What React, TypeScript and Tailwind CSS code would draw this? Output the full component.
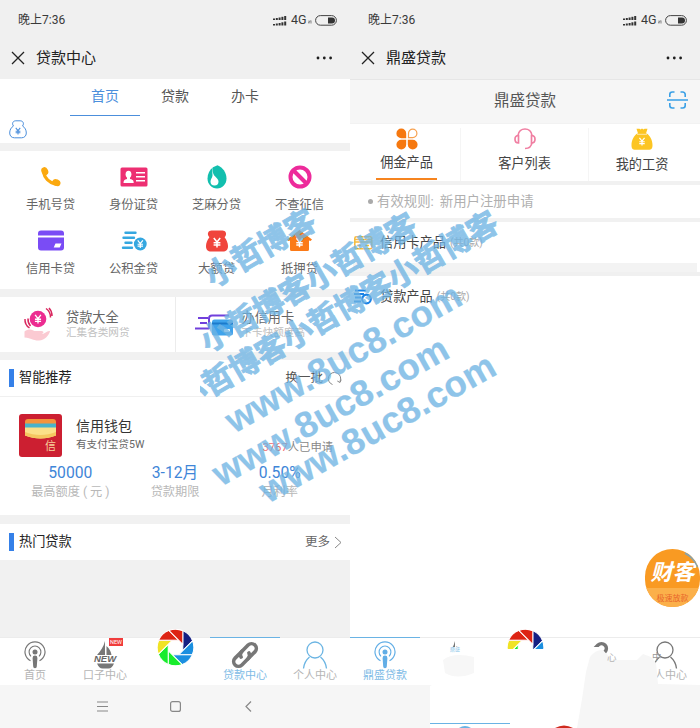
import React from "react";

const FONT = "font-['Roboto','Noto_Sans_CJK_SC',sans-serif]";

function Signal() {
  const hs = [1.5, 2, 2.5, 3.2, 4];
  return (
    <svg width="14" height="11" viewBox="0 0 14 11" fill="#333">
      {hs.map((h, i) => (
        <g key={i}>
          <rect x={i * 2.8} y={5 - h} width="2" height={h} />
          <rect x={i * 2.8} y={10.5 - h} width="2" height={h} />
        </g>
      ))}
    </svg>
  );
}

function StatusHeader({ title }: { title: string }) {
  return (
    <header className="h-[79px] shrink-0 bg-[#f0f0f0] text-[#222]">
      <div className="flex h-[40px] items-center pl-[18px] pr-[13px] text-[12px] leading-none text-[#3a3a3a]">
        <span className="flex-1">晚上7:36</span>
        <Signal />
        <span className="ml-[4px] w-[16px] text-[12.500px]">4G</span>
        <svg className="mt-[4px] ml-[1px]" width="4" height="4" viewBox="0 0 4 4" stroke="#777" strokeWidth="0.900">
          <path d="M1 .5v3M3 .5v3M.3 2.800l2.400-2" />
        </svg>
        <svg className="ml-[3px]" width="22" height="11" viewBox="0 0 22 11">
          <rect x="0.600" y="0.600" width="20.800" height="9.600" rx="4.800" fill="none" stroke="#444" strokeWidth="1" />
          <path d="M13 2.400h4a2.800 2.800 0 0 1 0 6h-4z" fill="#333" />
        </svg>
      </div>
      <div className="flex h-[35px] items-center pl-[11px] pr-[17px] leading-none">
        <svg width="14" height="14" viewBox="0 0 14 14" stroke="#222" strokeWidth="1.300">
          <path d="M1 1l12 12M13 1L1 13" />
        </svg>
        <span className="mt-[1px] ml-[11px] flex-1 text-[15px]">{title}</span>
        <svg width="17" height="4" viewBox="0 0 17 4" fill="#1d1d1d">
          <circle cx="2" cy="2" r="1.400" />
          <circle cx="8.300" cy="2" r="1.400" />
          <circle cx="14.600" cy="2" r="1.400" />
        </svg>
      </div>
    </header>
  );
}

const Yen = ({ x, y, s, c }: { x: number; y: number; s: number; c: string }) => (
  <g transform={`translate(${x} ${y}) scale(${s})`} stroke={c} strokeWidth="1.500" fill="none">
    <path d="M-3.200-4.500L0 -.5L3.200-4.500M0-.8V5M-3.400.3H3.400M-3.400 2.600H3.400" />
  </g>
);

const icons: Record<string, React.ReactNode> = {
  phone: (
    <svg width="21" height="20" viewBox="0 0 21 20" fill="#fba90f">
      <path d="M3.500 5C4.500 10.500 9 15.500 15.500 17" fill="none" stroke="#fba90f" strokeWidth="3.400" strokeLinecap="round" />
      <ellipse cx="4.800" cy="4.200" rx="3.300" ry="4.200" transform="rotate(-25 4.800 4.200)" />
      <ellipse cx="16.400" cy="15.600" rx="4.200" ry="3.300" transform="rotate(25 16.400 15.600)" />
    </svg>
  ),
  id: (
    <svg width="28" height="20" viewBox="0 0 28 20">
      <rect x="0.500" y="0.500" width="27" height="19" rx="1.500" fill="#ed2f72" />
      <g fill="#fff">
        <ellipse cx="8.500" cy="7.300" rx="2.900" ry="3.600" />
        <path d="M7 9h3v3c3 .8 3.700 1.500 3.700 4H3.500c0-2.500.8-3.200 3.500-4z" />
        <path d="M16 5h9v1.500h-9zM16 9h9v1.500h-9zM16 13h9v1.500h-9z" />
      </g>
    </svg>
  ),
  drop: (
    <svg width="20" height="24" viewBox="0 0 20 24">
      <path d="M10.500.3C16 2.500 19.500 8 19.500 13.500c0 5.500-4 10-9.500 10S.5 19 .5 13.500C.5 9 2.500 5 6 2.200z" fill="#12bfae" />
      <path d="M5.500 1.500c-.2 5.500.5 7.500 2.500 9.700 1.500 1.600 3.500 3 3.500 5.300a4 4 0 0 1-8 0c0-2.200 1.800-3.500 2-6C5.700 8 4.500 5 5.500 1.500z" fill="#fff" />
    </svg>
  ),
  ban: (
    <svg width="24" height="24" viewBox="0 0 24 24" fill="none" stroke="#ed2b9b" strokeWidth="4">
      <circle cx="12" cy="12" r="9.500" />
      <path d="M5 5l14 14" />
    </svg>
  ),
  card: (
    <svg width="26" height="21" viewBox="0 0 26 21">
      <path d="M3 .5h20a3 3 0 0 1 3 3V5.500H0V3.500a3 3 0 0 1 3-3zM0 7.500h26v10a3 3 0 0 1-3 3H3a3 3 0 0 1-3-3z" fill="#7a4cf5" />
      <path d="M17.500 13.500h6l-1.800 4h-6z" fill="#fff" />
    </svg>
  ),
  fund: (
    <svg width="26" height="20" viewBox="0 0 26 20">
      <g stroke="#35a7e0" strokeWidth="2.400" strokeLinecap="round">
        <path d="M4.500 1.800h10M2.500 6.800h10.500M4.500 11.700h6M2 16.700h9" />
      </g>
      <circle cx="19.300" cy="13" r="6.400" fill="#35a7e0" />
      <Yen x={19.3} y={13} s={0.8} c="#fff" />
    </svg>
  ),
  bag: (
    <svg width="22" height="22" viewBox="0 0 22 22">
      <path d="M5.500.5h11c3 0 4.500 3 3 5.500-.5.800-.8 1-.8 1.500C20.500 9.500 22 13 22 16c0 4-2 5.500-5 5.500H5c-3 0-5-1.500-5-5.500 0-3 1.500-6.500 3.300-8.500 0-.5-.3-.7-.8-1.500C1 3.500 2.500.5 5.500.5z" fill="#f0443c" />
      <Yen x={11} y={12.5} s={1} c="#fff" />
    </svg>
  ),
  house: (
    <svg width="25" height="21" viewBox="0 0 25 21">
      <path d="M12.500 0L25 9.500l-1.500 1.500-1.500-.5v9a1.500 1.500 0 0 1-1.500 1.500h-16A1.500 1.500 0 0 1 3 19.500v-9l-1.500.5L0 9.500z" fill="#fb7a17" />
      <Yen x={12.5} y={12.5} s={0.95} c="#fff" />
    </svg>
  ),
};

const grid: [string, string][] = [
  ["phone", "手机号贷"],
  ["id", "身份证贷"],
  ["drop", "芝麻分贷"],
  ["ban", "不查征信"],
  ["card", "信用卡贷"],
  ["fund", "公积金贷"],
  ["bag", "大额贷"],
  ["house", "抵押贷"],
];

function Podcast({ c }: { c: string }) {
  return (
    <svg width="22" height="28" viewBox="0 0 22 28" fill="none" stroke={c}>
      <path d="M6.500 19.800A10 10 0 1 1 15.500 19.800" strokeWidth="1.200" />
      <path d="M7 15.300A5.900 5.900 0 1 1 15 15.300" strokeWidth="1.100" />
      <circle cx="11" cy="11" r="2.500" fill={c} stroke="none" />
      <path d="M8.600 17a2.400 2.400 0 0 1 4.800 0l-.6 8.500a1.800 1.800 0 0 1-3.600 0z" fill={c} stroke="none" />
    </svg>
  );
}

function Boat() {
  return (
    <svg className="overflow-visible" width="26" height="28" viewBox="0 0 26 28">
      <path d="M13 0v14H5C8.500 10 11.500 6 13 0zM14.500 5c3 2.500 4.500 5.500 5 9h-5zM5 22.500h17c-1.500 3.500-3 5-5.500 5h-6C8 27.500 6.500 26 5 22.500z" fill="#777" />
      <text x="2" y="21" fontFamily="Liberation Sans" fontSize="9.500" fontStyle="italic" fontWeight="bold" fill="#666" stroke="#fff" strokeWidth="2" paintOrder="stroke">NEW</text>
    </svg>
  );
}

function Aperture() {
  const blades = ["#152083", "#1b8fe0", "#1b8fe0", "#18ec2c", "#18ec2c", "#f0e325", "#dd2414", "#dd2414"];
  return (
    <svg width="37" height="37" viewBox="-18.500 -18.500 37 37">
      {blades.map((c, i) => (
        <path
          key={i}
          d="M7.300-16.800L7.300 3L17.040-6.700A18.300 18.300 0 0 0 7.300-16.800Z"
          transform={`rotate(${i * 45})`}
          fill={c}
          stroke="#fff"
          strokeWidth="1"
        />
      ))}
    </svg>
  );
}

function Chain({ c }: { c: string }) {
  return (
    <svg width="28" height="28" viewBox="0 0 28 28" fill="none" stroke={c} strokeWidth="3.600" strokeLinecap="round">
      <g transform="rotate(-45 14 14)">
        <path d="M14.500 9.200H4.800a4.800 4.800 0 0 0 0 9.600h9a4.800 4.800 0 0 0 4.400-3.500" />
        <path d="M13.500 18.800h9.700a4.800 4.800 0 0 0 0-9.600h-9a4.800 4.800 0 0 0-4.400 3.500" />
      </g>
    </svg>
  );
}

function Person({ c }: { c: string }) {
  return (
    <svg width="26" height="28" viewBox="0 0 26 28" fill="none" stroke={c} strokeWidth="1.300">
      <circle cx="13" cy="9" r="8" />
      <path d="M1.500 27.500c.5-5 2.500-8.500 6-11.500M24.500 27.500c-.5-5-2.500-8.500-6-11.500" />
    </svg>
  );
}

function Tab({ icon, label, active, color = "text-[#b5b5b5]" }: { icon: React.ReactNode; label?: string; active?: boolean; color?: string }) {
  return (
    <div className={`flex w-[70px] flex-col items-center border-t pt-[2px] ${active ? "border-[#6ab3e4]" : "border-[#ececec]"}`}>
      <div className="flex h-[29px] items-center justify-center">{icon}</div>
      <span className={`mt-[1px] text-[11px] leading-[11px] whitespace-nowrap ${color}`}>{label}</span>
    </div>
  );
}

function SectionTitle({ children, right }: { children: string; right: React.ReactNode }) {
  return (
    <div className="flex h-[36px] shrink-0 items-center bg-white pl-[9px] pr-[8px] text-[13.200px] leading-none text-[#222]">
      <span className="mr-[5px] h-[18px] w-[5px] bg-[#3580e8]" />
      <span className="flex-1">{children}</span>
      {right}
    </div>
  );
}

function Feature({ icon, title, sub }: { icon: React.ReactNode; title: string; sub: string }) {
  return (
    <div className="flex h-[55px] flex-1 items-center pl-[19px] leading-none">
      <div className="w-[47px]">{icon}</div>
      <div className="pt-[1px]">
        <div className="text-[13.200px] text-[#666]">{title}</div>
        <div className="mt-[4px] text-[10.600px] text-[#c0c0c0]">{sub}</div>
      </div>
    </div>
  );
}

function LoanPhone() {
  return (
    <div className="flex h-[728px] w-[350px] flex-col overflow-hidden bg-[#f1f1f1]">
      <StatusHeader title="贷款中心" />
      <div className="h-[64px] shrink-0 bg-white">
        <div className="flex h-[37px] justify-center text-[14px] leading-[35px] text-[#555]">
          <span className="w-[70px] border-b border-[#4c8fdc] text-center text-[#4c8fdc]">首页</span>
          <span className="w-[70px] text-center">贷款</span>
          <span className="w-[70px] text-center">办卡</span>
        </div>
        <svg className="mt-[4px] ml-[9px]" width="18" height="19" viewBox="0 0 18 19" fill="none" stroke="#4c8fdc">
          <path d="M4.500 6C2.500 3.500 4 .8 6.800.8h4.400c2.800 0 4.300 2.700 2.300 5.200 2.500 1.500 3.800 4 3.800 7 0 3-2 4.800-4.800 4.800h-7C2.700 17.800.7 16 .7 13S2 7.500 4.500 6z" />
          <Yen x={9} y={11} s={0.7} c="#4c8fdc" />
        </svg>
      </div>
      <div className="mt-[8px] grid h-[138px] shrink-0 grid-cols-4 grid-rows-2 bg-white px-[9px] pt-[11px]">
        {grid.map(([k, label]) => (
          <div key={k} className="flex h-[64px] flex-col items-center">
            <div className="flex h-[30px] items-center">{icons[k]}</div>
            <span className="mt-[7px] text-[12.300px] leading-[13px] text-[#666]">{label}</span>
          </div>
        ))}
      </div>
      <div className="mt-[8px] flex h-[55px] shrink-0 bg-white">
        <Feature
          title="贷款大全"
          sub="汇集各类网贷"
          icon={
            <svg className="mb-[2px]" width="38" height="34" viewBox="0 0 38 34">
              <circle cx="19" cy="12" r="8.300" fill="#ec2c91" />
              <Yen x={19} y={12} s={0.9} c="#fff" />
              <g fill="none" stroke="#d9285f" strokeWidth="1.500">
                <path d="M6 12c-.3 4 1.500 7 4.500 9M9 11.500c-.2 3 .8 5.500 2.500 7.500M27 1.500c3 2 4.500 5 4.500 9M30 1c2 2 3 4.500 3 8" />
              </g>
              <path d="M5.500 24.500c4-3 7-2 10-.5h7c3 0 2 3 0 3 4 0 5-3.500 8.500-3-1 4.500-5 9-11 9.500-6 .3-7-2.500-14.500-3z" fill="#fbcad2" />
            </svg>
          }
        />
        <div className="w-px bg-[#ececec]" />
        <Feature
          title="办信用卡"
          sub="下卡快额度高"
          icon={
            <svg width="40" height="28" viewBox="0 0 40 28">
              <path d="M3 7h10M5 12h7M0 17.500h14M14 18V7.500A3 3 0 0 1 17 4.500h17" fill="none" stroke="#7140dc" strokeWidth="2" />
              <rect x="17" y="8.500" width="21" height="16" rx="2.500" fill="#3fa3ec" />
              <path d="M17 12.500h21" stroke="#1c7acb" strokeWidth="2" />
              <rect x="29" y="18" width="6" height="3" rx="1" fill="#fff" />
            </svg>
          }
        />
      </div>
      <div className="mt-[8px] border-b border-[#f0f0f0]">
        <SectionTitle
          right={
            <span className="flex items-center text-[12.500px] text-[#555]">
              换一批
              <svg className="ml-[4px]" width="15" height="15" viewBox="0 0 15 15" fill="none" stroke="#888">
                <path d="M5.500 13.500A6.200 6.200 0 1 1 13 10.500M10.300 10L13 11.500l1.200-2.800" />
              </svg>
            </span>
          }
        >
          智能推荐
        </SectionTitle>
      </div>
      <div className="h-[118px] shrink-0 bg-white pt-[17px]">
        <div className="flex h-[44px] pl-[19px] pr-[17px] leading-none">
          <svg width="43" height="43" viewBox="0 0 43 43">
            <rect width="43" height="43" rx="3" fill="#cc1f31" />
            <path d="M6 8a3 3 0 0 1 3-3h25a3 3 0 0 1 3 3v3H6z" fill="#f5943c" />
            <path d="M6 9.500h31v5H6z" fill="#49b3cb" />
            <path d="M6 13.500h31v8c-10 4-21 4-31 0z" fill="#fbe089" />
            <path d="M6 18c10 4 21 4 31 0v3.500c-10 4-21 4-31 0z" fill="#f5c660" />
            <text x="26" y="36" fontFamily="Noto Sans CJK SC" fontSize="11" fill="#f8d39d">信</text>
          </svg>
          <div className="ml-[14px] flex-1 pt-[5px]">
            <div className="text-[14px] text-[#333]">信用钱包</div>
            <div className="mt-[7px] text-[10.600px] text-[#666]">有支付宝贷5W</div>
          </div>
          <div className="pt-[28px] text-[11.300px] text-[#888]">
            <span className="text-[#ef6a6a]">3767</span>人已申请
          </div>
        </div>
        <div className="flex px-[18px] pt-[6px] text-center">
          {[
            ["50000", "最高额度 ( 元 )"],
            ["3-12月", "贷款期限"],
            ["0.50%", "月利率"],
          ].map(([v, l]) => (
            <div key={l} className="w-[105px] whitespace-nowrap">
              <div className="text-[15.700px] leading-[18px] text-[#3f86d8]">{v}</div>
              <div className="mt-[4px] text-[12.200px] leading-[13px] text-[#b8b8b8]">{l}</div>
            </div>
          ))}
        </div>
      </div>
      <div className="mt-[9px]">
        <SectionTitle
          right={
            <span className="flex items-center text-[12.500px] text-[#666]">
              更多
              <svg className="ml-[4px]" width="8" height="13" viewBox="0 0 8 13" fill="none" stroke="#888">
                <path d="M1 1l6 5.500L1 12" />
              </svg>
            </span>
          }
        >
          热门贷款
        </SectionTitle>
      </div>
      <div className="mt-auto flex h-[48px] shrink-0 bg-white">
        <Tab icon={<Podcast c="#777" />} label="首页" />
        <div className="relative">
          <Tab icon={<Boat />} label="口子中心" />
          <span className="absolute top-[1px] left-[39px] h-[8px] w-[14px] bg-[#f03c3c] text-center text-[5.500px] leading-[8px] text-white">NEW</span>
        </div>
        <div className="relative w-[70px] border-t border-[#ececec]">
          <div className="absolute top-[-9px] left-[17px]">
            <Aperture />
          </div>
        </div>
        <Tab icon={<Chain c="#777" />} label="贷款中心" active color="text-[#7dbbe6]" />
        <Tab icon={<Person c="#6cb5e3" />} label="个人中心" />
      </div>
      <div className="flex h-[43px] shrink-0 items-center justify-center gap-[62px] bg-[#f6f6f6]">
        <svg width="11" height="11" viewBox="0 0 11 11" stroke="#888" strokeWidth="1.200"><path d="M0 1h11M0 5.500h11M0 10h11" /></svg>
        <svg width="11" height="11" viewBox="0 0 11 11" fill="none" stroke="#888" strokeWidth="1.200"><rect x="0.600" y="0.600" width="9.800" height="9.800" rx="2" /></svg>
        <svg width="11" height="11" viewBox="0 0 11 11" fill="none" stroke="#888" strokeWidth="1.200"><path d="M8 .5L3 5.500l5 5" /></svg>
      </div>
    </div>
  );
}

function CountRow({ icon, title }: { icon: React.ReactNode; title: string }) {
  return (
    <div className="flex h-[41px] items-center bg-white pl-[4px] text-[13.200px] leading-none text-[#444]">
      <span className="w-[26px]">{icon}</span>
      {title}
      <span className="mt-[2px] ml-[4px] text-[10.100px] text-[#aaa]">(共0款)</span>
    </div>
  );
}

function ProductPhone() {
  return (
    <div className="flex h-[728px] w-[350px] flex-col overflow-hidden bg-white">
      <StatusHeader title="鼎盛贷款" />
      <div className="flex h-[45px] shrink-0 items-center border-y border-t-[#e6e6e6] border-b-[#f2f2f2] bg-[#f6f6f6] pr-[12px] pl-[33px]">
        <span className="flex-1 text-center text-[15.500px] leading-none text-[#555]">鼎盛贷款</span>
        <svg className="mb-[4px]" width="21" height="18" viewBox="0 0 21 18" fill="none" stroke="#3aa0e6" strokeWidth="1.600">
          <path d="M2.800 6V3.500a2.500 2.500 0 0 1 2.500-2.500H7.500M13.500 1h2.200a2.500 2.500 0 0 1 2.500 2.500V6M2.800 12v2.500A2.500 2.500 0 0 0 5.300 17H7.500M13.500 17h2.200a2.500 2.500 0 0 0 2.500-2.500V12M0 9h21" />
        </svg>
      </div>
      <div className="flex h-[57px] shrink-0 pt-[4px] text-[13.200px] leading-none text-[#444]">
        <div className="flex w-[111px] justify-center border-r border-[#f5f5f5] pl-[3px]">
          <div className="mb-[1px] flex w-[61px] flex-col items-center border-b-2 border-[#f6841f]">
            <svg width="22" height="22" viewBox="0 0 22 22" fill="#f6780f">
              <path d="M5.300.5a4.900 4.900 0 0 1 4.900 4.900v4.900H5.300a4.900 4.900 0 0 1 0-9.800zM5.300 21.500a4.900 4.900 0 0 0 4.900-4.900v-4.900H5.300a4.900 4.900 0 0 0 0 9.800zM16.700 21.500a4.900 4.900 0 0 1-4.900-4.900v-4.900h4.900a4.900 4.900 0 0 1 0 9.800z" />
              <path d="M16.700 1.200a4.200 4.200 0 0 0-4.200 4.200v4.200h4.200a4.200 4.200 0 0 0 0-8.400z" fill="none" stroke="#f7a14f" strokeWidth="1.200" />
            </svg>
            <span className="mt-[6px] whitespace-nowrap">佣金产品</span>
          </div>
        </div>
        <div className="flex w-[128px] flex-col items-center border-r border-[#f5f5f5]">
          <svg width="22" height="22" viewBox="0 0 22 22" fill="none" stroke="#f07fa2" strokeWidth="1.700">
            <path d="M4 7.500C4.500 3.500 7.500 1 11 1s6.500 2.500 7 6.500M18 14.500c-.5 3.500-3 6-7 6" />
            <path d="M4.500 7.500v7.500C2.500 15 1 13.500 1 11.200S2.500 7.500 4.500 7.500zM17.500 7.500v7.500c2 0 3.500-1.500 3.500-3.800s-1.500-3.700-3.500-3.700z" />
          </svg>
          <span className="mt-[7px]">客户列表</span>
        </div>
        <div className="flex flex-1 flex-col items-center pr-[5px]">
          <svg width="22" height="22" viewBox="0 0 22 22">
            <path d="M5.500.8h3l1 .6 1.500-.9 1.500.9 1-.6h3l-1.500 4.700h.7C19 7.500 21.500 12 21.500 17c0 3.500-1 4.800-4 4.800h-13c-3 0-4-1.300-4-4.800C.5 12 3 7.500 6.300 5.500H7z" fill="#fcc523" />
            <path d="M6 6.300h10" stroke="#fff" strokeWidth=".6" />
            <Yen x={11} y={13.5} s={0.8} c="#fff" />
          </svg>
          <span className="mt-[8px]">我的工资</span>
        </div>
      </div>
      <div className="flex h-[41px] shrink-0 items-center border-y-4 border-[#f1f1f1] bg-white pl-[18px] text-[13.400px] leading-none text-[#b0b0b0]">
        <span className="mr-[4px] h-[5px] w-[5px] rounded-full bg-[#aaa]" />
        有效规则:
        <span className="ml-[6px]">新用户注册申请</span>
      </div>
      <CountRow
        title="信用卡产品"
        icon={
          <svg width="19" height="14" viewBox="0 0 19 14" fill="none" stroke="#f5bb3b" strokeWidth="1.500">
            <rect x="0.800" y="0.800" width="17" height="12" rx="1.500" />
            <path d="M1 3.500h17M1 6h17M3 9.500h4M11 9.500h4" />
          </svg>
        }
      />
      <div className="mx-[3px] h-[9px] shrink-0 bg-[#f3f3f3]" />
      <div className="h-[4px] shrink-0 bg-[#f0f0f0]" />
      <CountRow
        title="贷款产品"
        icon={
          <svg width="18" height="16" viewBox="0 0 18 16" fill="none" stroke="#1a83e6" strokeWidth="2.200">
            <path d="M1 1.500h11M0 5h10M1 8.500h6M0 12.500h7" />
            <circle cx="12.500" cy="10" r="4.300" />
          </svg>
        }
      />
      <div className="relative mt-auto h-[91px] shrink-0">
        <div className="flex h-[48px]">
          <Tab icon={<Podcast c="#62aee6" />} label="鼎盛贷款" active color="text-[#7dbbe6]" />
          <Tab icon={<Boat />} />
          <div className="relative w-[70px] border-t border-[#ececec]">
            <div className="absolute top-[-9px] left-[17px]">
              <Aperture />
            </div>
          </div>
          <Tab icon={<Chain c="#777" />} />
          <Tab icon={<Person c="#777" />} label="个人中心" />
        </div>
        <div className="h-[43px] bg-[#f6f6f6]" />
        <svg className="absolute top-0 left-0" width="350" height="91" viewBox="0 0 350 91">
          <path d="M80 91V49L84 47V10H155V12H200V13H236V10H249L256 17L256 26L268 28H289L296 18L302 20L304 46L307 48L270 91z" fill="#fff" />
          <path d="M227 91L232 62L236 35L240 20Q246 12 253 13L262 23H287L293 17L301 20L306 26L308 47L350 48V91z" fill="#f6f6f6" />
          <path d="M93 23Q103 15 124 20V36Q107 43 95 36z" fill="#f7f7f7" />
          <text x="100" y="14" fontFamily="Noto Sans CJK SC" fontSize="5" fill="#84bfe8">鼎盛</text>
          <text x="257" y="24" fontFamily="Noto Sans CJK SC" fontSize="9.500" fill="#b5b5b5">心</text>
          <text x="302" y="23" fontFamily="Noto Sans CJK SC" fontSize="9.500" fill="#999">中</text>
          <path d="M80 86.500h80" stroke="#6ab3e4" />
          <path d="M109 91q6-4 12 0z" fill="#6ab3e4" />
          <path d="M205 91q9-5 18 0z" fill="#cf2a1e" />
        </svg>
      </div>
    </div>
  );
}

function Watermark() {
  return (
    <svg className="pointer-events-none absolute top-0 left-0" width="700" height="728" viewBox="0 0 700 728">
      <defs>
        <clipPath id="wm">
          <rect x="200" y="200" width="310" height="310" />
        </clipPath>
      </defs>
      <g clipPath="url(#wm)" fill="#6fb4e3" stroke="#6fb4e3" opacity="0.78" fontWeight="bold">
        <g fontFamily="Noto Sans CJK SC" fontSize="30.500" strokeWidth="0.900">
          <text transform="translate(213 288) rotate(-30)">小哲博客</text>
          <text transform="translate(208 353) rotate(-30)">小哲博客小哲博客</text>
          <text transform="translate(184 412) rotate(-30)">小哲博客小哲博客小哲博客</text>
        </g>
        <g fontFamily="Liberation Sans" fontSize="36.500" strokeWidth="0.200">
          <text transform="translate(234 434) rotate(-29.500)" textLength="265">www.8uc8.com</text>
          <text transform="translate(221 487) rotate(-29.500)" textLength="265">www.8uc8.com</text>
          <text transform="translate(268 504) rotate(-29.500)" textLength="265">www.8uc8.com</text>
        </g>
      </g>
    </svg>
  );
}

export default function App() {
  return (
    <div className={`relative flex h-[728px] w-[700px] overflow-hidden ${FONT}`}>
      <LoanPhone />
      <ProductPhone />
      <div className="absolute top-[549px] left-[645px] flex h-[58px] w-[55px] flex-col items-center overflow-hidden rounded-full bg-[#f99a22] leading-none text-white">
        <svg className="absolute top-0 left-0" width="55" height="58" viewBox="0 0 55 58">
          <path d="M40 4A29 29 0 0 1 53 18" fill="none" stroke="#8aa2a8" strokeWidth="2" />
        </svg>
        <span className="mt-[13px] text-[22px] font-bold italic">财客</span>
        <span className="mt-[4px] flex h-[20px] w-full justify-center bg-[#fbb04a] pt-[7px] text-[8px] text-[#e9662a]">极速放款</span>
      </div>
      <Watermark />
    </div>
  );
}
